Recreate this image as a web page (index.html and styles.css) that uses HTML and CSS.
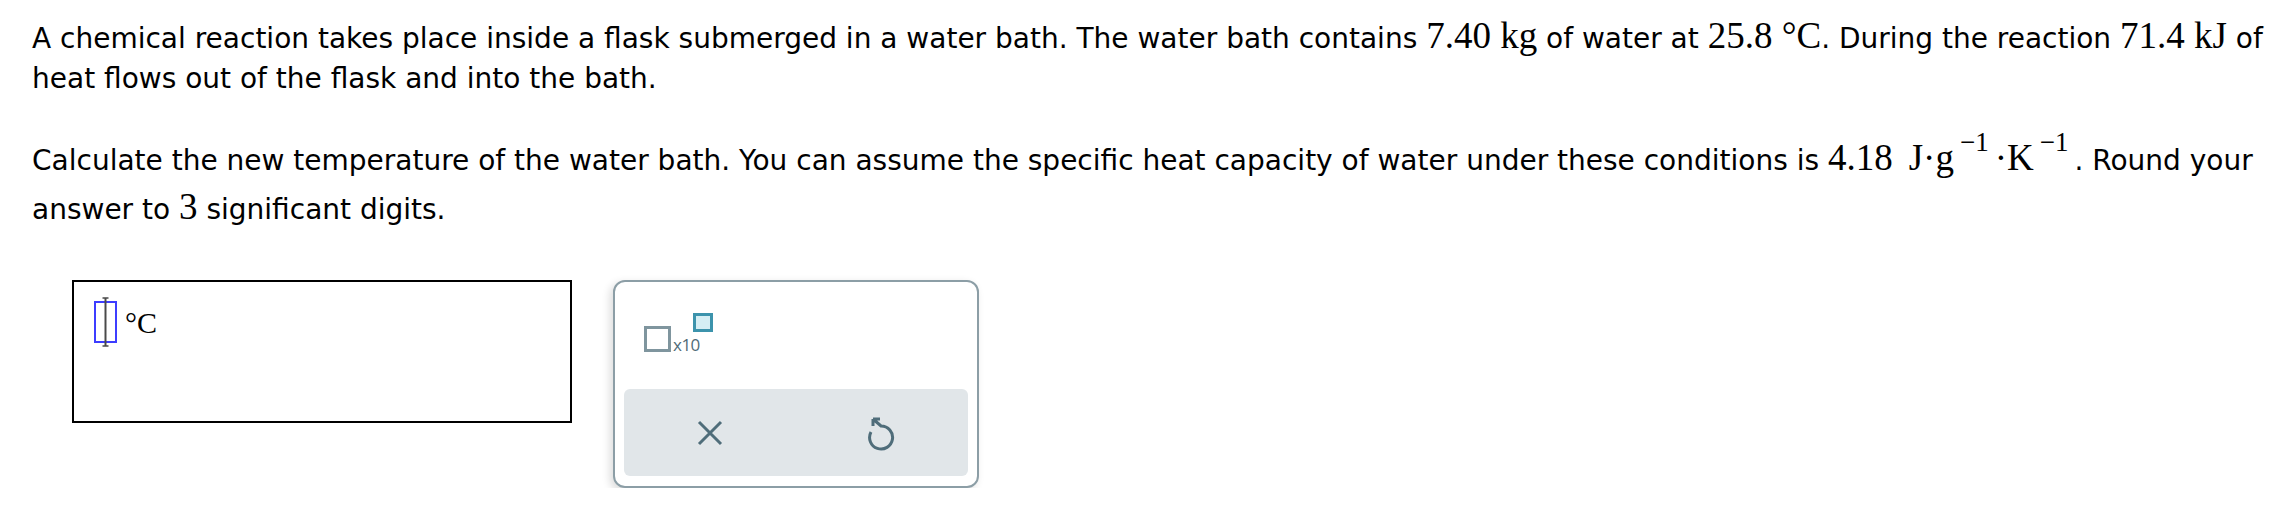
FILE: index.html
```html
<!DOCTYPE html>
<html lang="en">
<head>
<meta charset="utf-8">
<title>Question</title>
<link rel="stylesheet" href="styles.css">
</head>
<body>
<main class="page">
  <p class="para">A chemical reaction takes place inside a flask submerged in a water bath. The water bath contains <span class="m">7.40 kg</span> of water at <span class="m">25.8 °C</span>. During the reaction <span class="m">71.4 kJ</span> of heat flows out of the flask and into the bath.</p>
  <p class="para para-2">Calculate the new temperature of the water bath. You can assume the specific heat capacity of water under these conditions is <span class="m">4.18<span class="unit">J·g<span class="sup">−1</span>·K<span class="sup">−1</span></span></span>. Round your answer to <span class="m">3</span> significant digits.</p>

  <div class="answer-row">
    <div class="answer-box">
      <svg class="cursor" width="26" height="50" viewBox="0 0 26 50" aria-hidden="true">
        <rect x="2" y="5" width="21" height="40" fill="none" stroke="#3d3dff" stroke-width="2"/>
        <line x1="12.5" y1="1" x2="12.5" y2="49" stroke="#4a4a4a" stroke-width="2"/>
        <path d="M9.5 1 L15.5 1 M9.5 49 L15.5 49" stroke="#4a4a4a" stroke-width="1.5"/>
      </svg>
      <span class="unit-label">°C</span>
    </div>

    <div class="panel">
      <div class="panel-top">
        <div class="sci">
          <span class="sci-box"></span>
          <span class="sci-x">x10</span>
          <span class="sci-exp"></span>
        </div>
      </div>
      <div class="panel-actions">
        <button class="act" type="button" aria-label="Clear">
          <svg width="26" height="26" viewBox="0 0 26 26" aria-hidden="true">
            <path d="M2 2 L24 24 M24 2 L2 24" stroke="#4f6d7a" stroke-width="3" stroke-linecap="butt"/>
          </svg>
        </button>
        <button class="act" type="button" aria-label="Undo">
          <svg width="28" height="36" viewBox="0 0 28 36" aria-hidden="true">
            <path d="M5 4 L5 11 M5 4 L12 4 M5 4 L13 11 A11.5 11.5 0 1 1 3 17" fill="none" stroke="#4f6d7a" stroke-width="3" stroke-linecap="butt" stroke-linejoin="miter"/>
          </svg>
        </button>
      </div>
    </div>
  </div>
</main>
</body>
</html>
```

FILE: styles.css
```css
html, body {
  margin: 0;
  padding: 0;
  background: #ffffff;
}

.page {
  padding: 10px 16px 0 32px;
  font-family: "DejaVu Sans", Verdana, sans-serif;
  font-size: 28px;
  color: #000000;
}

.para {
  margin: 0;
  line-height: 40px;
}

.para-2 {
  margin-top: 27px;
}

.m {
  display: inline-block;
  font-family: "Liberation Serif", "Times New Roman", serif;
  font-size: 37px;
  line-height: 45px;
  padding-top: 3px;
}

.unit {
  margin-left: 16px;
}

.sup {
  font-size: 27px;
  line-height: 1;
  vertical-align: 19px;
  margin-left: 6px;
  margin-right: 6px;
}

.answer-row {
  display: flex;
  align-items: flex-start;
  gap: 41px;
  margin-top: 50px;
  margin-left: 40px;
}

.answer-box {
  box-sizing: border-box;
  width: 500px;
  height: 143px;
  border: 2px solid #000000;
  display: flex;
  align-items: flex-start;
  padding: 15px 0 0 19px;
}

.cursor {
  display: block;
}

.unit-label {
  font-family: "Liberation Serif", "Times New Roman", serif;
  font-size: 30px;
  line-height: 30px;
  margin-left: 6px;
  margin-top: 11px;
}

.panel {
  box-sizing: border-box;
  width: 366px;
  height: 208px;
  border: 2px solid #8c9ea6;
  border-radius: 12px;
  background: #ffffff;
  box-shadow: -3px 3px 8px rgba(0, 0, 0, 0.14);
  padding: 0 9px 10px 9px;
  display: flex;
  flex-direction: column;
}

.panel-top {
  height: 107px;
  padding: 31px 0 0 20px;
  box-sizing: border-box;
}

.sci {
  display: flex;
  align-items: flex-start;
}

.sci-box {
  box-sizing: border-box;
  width: 27px;
  height: 26px;
  border: 3px solid #7f959e;
  margin-top: 13px;
}

.sci-x {
  font-family: "Open Sans", "Liberation Sans", sans-serif;
  font-size: 17px;
  line-height: 17px;
  color: #506b77;
  letter-spacing: -0.5px;
  margin-top: 23px;
  margin-left: 2px;
}

.sci-exp {
  box-sizing: border-box;
  width: 20px;
  height: 19px;
  border: 3px solid #3c93ac;
  background: #d5eef4;
  margin-left: -7px;
}

.panel-actions {
  flex: 1;
  display: flex;
  background: #e1e6e9;
  border-radius: 6px;
}

.act {
  flex: 1;
  border: 0;
  background: transparent;
  padding: 0;
  display: flex;
  align-items: center;
  justify-content: center;
  cursor: pointer;
}

.act svg {
  display: block;
}
```
